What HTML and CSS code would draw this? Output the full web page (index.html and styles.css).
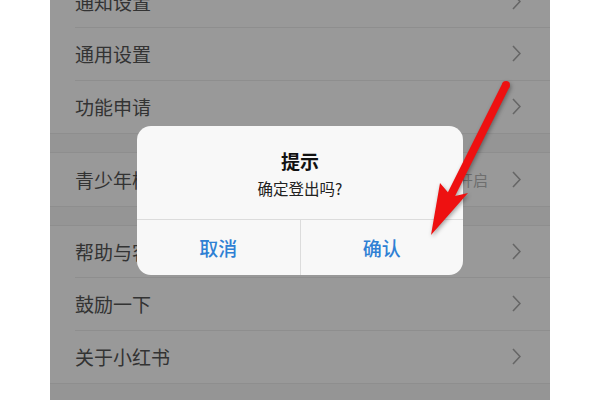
FILE: index.html
```html
<!DOCTYPE html>
<html lang="zh-CN">

<head>
    <meta charset="UTF-8">
    <meta name="viewport" content="width=device-width, initial-scale=1.0">
    <title>设置</title>
    <link rel="stylesheet" href="styles.css">
</head>

<body>
    <div class="phone">
        <div class="settings">
            <div class="group">
                <div class="row"><span class="label">通知设置</span><svg class="chevron" width="9" height="17" viewBox="0 0 9 17"><polyline points="1,1 8,8.5 1,16" /></svg></div>
                <div class="row"><span class="label">通用设置</span><svg class="chevron" width="9" height="17" viewBox="0 0 9 17"><polyline points="1,1 8,8.5 1,16" /></svg></div>
                <div class="row"><span class="label">功能申请</span><svg class="chevron" width="9" height="17" viewBox="0 0 9 17"><polyline points="1,1 8,8.5 1,16" /></svg></div>
            </div>
            <div class="group">
                <div class="row"><span class="label">青少年模式</span><span class="value">未开启</span><svg class="chevron" width="9" height="17" viewBox="0 0 9 17"><polyline points="1,1 8,8.5 1,16" /></svg></div>
            </div>
            <div class="group">
                <div class="row"><span class="label">帮助与客服</span><svg class="chevron" width="9" height="17" viewBox="0 0 9 17"><polyline points="1,1 8,8.5 1,16" /></svg></div>
                <div class="row"><span class="label">鼓励一下</span><svg class="chevron" width="9" height="17" viewBox="0 0 9 17"><polyline points="1,1 8,8.5 1,16" /></svg></div>
                <div class="row"><span class="label">关于小红书</span><svg class="chevron" width="9" height="17" viewBox="0 0 9 17"><polyline points="1,1 8,8.5 1,16" /></svg></div>
            </div>
        </div>

        <div class="mask"></div>

        <div class="dialog">
            <div class="dialog-body">
                <div class="dialog-title">提示</div>
                <div class="dialog-msg">确定登出吗?</div>
            </div>
            <div class="dialog-actions">
                <div class="dialog-btn">取消</div>
                <div class="dialog-btn">确认</div>
            </div>
        </div>
    </div>

    <!-- red arrow pointing at the confirm button -->
    <svg class="arrow" width="600" height="400" viewBox="0 0 600 400">
        <circle cx="506" cy="85" r="4" fill="#ee1111" />
        <polygon fill="#ee1111"
            points="502.4,83.2 509.6,86.8 455.1,195.9 468,193 431,235 440,183 447.9,192.3" />
    </svg>
</body>

</html>
```

FILE: styles.css
```css
body {
    margin: 0;
    width: 600px;
    height: 400px;
    background: #fff;
    position: relative;
    overflow: hidden;
    font-family: "Noto Sans CJK SC", "Noto Sans", sans-serif;
}

.phone {
    width: 500px;
    height: 400px;
    margin: 0 auto;
    background: #f9f9f9;
    position: relative;
    overflow: hidden;
}

.settings {
    margin-top: -24.5px;
    display: flex;
    flex-direction: column;
    gap: 19px;
}

.group {
    background: #fff;
    box-shadow: 0 -1px 0 #ededed;
    border-bottom: 1px solid #ededed;
}

.row {
    height: 52.5px;
    box-sizing: border-box;
    margin-left: 25px;
    padding-right: 25px;
    display: flex;
    align-items: center;
    border-bottom: 1px solid #ededed;
}

.row:last-child {
    border-bottom: none;
}

.label {
    flex: 1;
    font-size: 19px;
    color: #555;
}

.value {
    font-size: 15px;
    color: #b8b8b8;
    margin-right: 24px;
}

.chevron {
    fill: none;
    stroke: #aaa;
    stroke-width: 1.6;
    margin-right: 4px;
}

.mask {
    position: absolute;
    inset: 0;
    background: rgba(0, 0, 0, 0.4);
}

.dialog {
    position: absolute;
    left: 87px;
    top: 126px;
    width: 326px;
    height: 149px;
    background: #f8f8f8;
    border-radius: 14px;
    display: flex;
    flex-direction: column;
    overflow: hidden;
}

.dialog-body {
    height: 94px;
    box-sizing: border-box;
    padding-top: 20px;
    text-align: center;
    border-bottom: 1px solid #dcdcdc;
}

.dialog-title {
    font-size: 19px;
    font-weight: bold;
    color: #111;
    line-height: 30px;
}

.dialog-msg {
    font-size: 15.5px;
    color: #222;
    line-height: 24px;
}

.dialog-actions {
    flex: 1;
    display: flex;
}

.dialog-btn {
    flex: 1;
    display: flex;
    justify-content: center;
    align-items: center;
    font-size: 19px;
    font-weight: 500;
    color: #2f80d4;
}

.dialog-btn + .dialog-btn {
    border-left: 1px solid #dcdcdc;
}

.arrow {
    position: absolute;
    left: 0;
    top: 0;
    pointer-events: none;
    filter: drop-shadow(1px 2px 2px rgba(0, 0, 0, 0.35));
}
```
